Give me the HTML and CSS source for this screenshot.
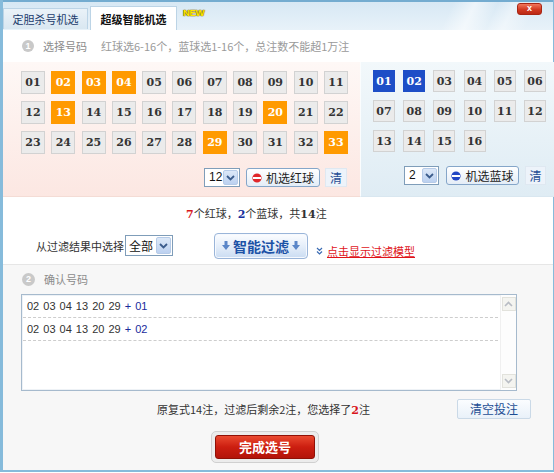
FILE: index.html
```html
<!DOCTYPE html>
<html lang="zh-CN">
<head>
<meta charset="utf-8">
<title>超级智能机选</title>
<link rel="stylesheet" href="styles.css">
</head>
<body>
<div class="win">
  <div class="head">
    <div class="tab">定胆杀号机选</div>
    <div class="tab active">超级智能机选</div>
    <span class="new">NEW</span>
    <div class="close">x</div>
  </div>

  <div class="step s1">
    <span class="num">1</span>
    <span class="step-title">选择号码</span>
    <span class="desc">红球选6-16个，蓝球选1-16个，总注数不能超1万注</span>
  </div>

  <div class="pick">
    <div class="panel red-panel">
      <div class="grid red-grid">
        <span class="ball">01</span><span class="ball on">02</span><span class="ball on">03</span><span class="ball on">04</span><span class="ball">05</span><span class="ball">06</span><span class="ball">07</span><span class="ball">08</span><span class="ball">09</span><span class="ball">10</span><span class="ball">11</span>
        <span class="ball">12</span><span class="ball on">13</span><span class="ball">14</span><span class="ball">15</span><span class="ball">16</span><span class="ball">17</span><span class="ball">18</span><span class="ball">19</span><span class="ball on">20</span><span class="ball">21</span><span class="ball">22</span>
        <span class="ball">23</span><span class="ball">24</span><span class="ball">25</span><span class="ball">26</span><span class="ball">27</span><span class="ball">28</span><span class="ball on">29</span><span class="ball">30</span><span class="ball">31</span><span class="ball">32</span><span class="ball on">33</span>
      </div>
      <div class="ctrl red-ctrl">
        <div class="sel sel-12"><span class="sel-val">12</span><span class="sel-arrow"><svg width="9" height="6" viewBox="0 0 9 6"><path d="M1 1 L4.5 4.5 L8 1" fill="none" stroke="#3b5c8c" stroke-width="1.8"/></svg></span></div>
        <div class="rbtn"><svg class="bico" width="10" height="10" viewBox="0 0 10 10"><circle cx="5" cy="5" r="4.6" fill="#e0262a"/><rect x="1" y="4" width="8" height="2" fill="#fff"/></svg><span>机选红球</span></div>
        <div class="clr">清</div>
      </div>
    </div>
    <div class="panel blue-panel">
      <div class="grid blue-grid">
        <span class="ball b on">01</span><span class="ball b on">02</span><span class="ball b">03</span><span class="ball b">04</span><span class="ball b">05</span><span class="ball b">06</span>
        <span class="ball b">07</span><span class="ball b">08</span><span class="ball b">09</span><span class="ball b">10</span><span class="ball b">11</span><span class="ball b">12</span>
        <span class="ball b">13</span><span class="ball b">14</span><span class="ball b">15</span><span class="ball b">16</span>
      </div>
      <div class="ctrl blue-ctrl">
        <div class="sel sel-2"><span class="sel-val">2</span><span class="sel-arrow"><svg width="9" height="6" viewBox="0 0 9 6"><path d="M1 1 L4.5 4.5 L8 1" fill="none" stroke="#3b5c8c" stroke-width="1.8"/></svg></span></div>
        <div class="rbtn bbtn"><svg class="bico" width="10" height="10" viewBox="0 0 10 10"><circle cx="5" cy="5" r="4.6" fill="#2146c4"/><rect x="1" y="4" width="8" height="2" fill="#fff"/></svg><span>机选蓝球</span></div>
        <div class="clr">清</div>
      </div>
    </div>
  </div>

  <div class="summary"><b class="rn">7</b>个红球，<b class="bn">2</b>个蓝球，共<b class="tn">14</b>注</div>

  <div class="filter">
    <span class="flabel">从过滤结果中选择</span>
    <div class="sel sel-all"><span class="sel-val">全部</span><span class="sel-arrow"><svg width="9" height="6" viewBox="0 0 9 6"><path d="M1 1 L4.5 4.5 L8 1" fill="none" stroke="#3b5c8c" stroke-width="1.8"/></svg></span></div>
    <div class="smart">
      <svg width="8" height="9" viewBox="0 0 8 9"><path d="M2.5 0 H5.5 V4 H8 L4 9 L0 4 H2.5 Z" fill="#5a86c8"/></svg>
      <span>智能过滤</span>
      <svg width="8" height="9" viewBox="0 0 8 9"><path d="M2.5 0 H5.5 V4 H8 L4 9 L0 4 H2.5 Z" fill="#5a86c8"/></svg>
    </div>
    <div class="more">
      <svg width="7" height="8" viewBox="0 0 7 8"><path d="M1 1 L3.5 3.5 L6 1 M1 4.5 L3.5 7 L6 4.5" fill="none" stroke="#3a6bb3" stroke-width="1.2"/></svg>
      <a class="link">点击显示过滤模型</a>
    </div>
  </div>

  <div class="confirm">
    <div class="step s2">
      <span class="num">2</span>
      <span class="step-title">确认号码</span>
    </div>
    <div class="list">
      <div class="rows">
        <div class="row">02 03 04 13 20 29 <span class="plus">+ 01</span></div>
        <div class="row">02 03 04 13 20 29 <span class="plus">+ 02</span></div>
      </div>
      <div class="sbar">
        <span class="sb-btn"><svg width="9" height="6" viewBox="0 0 9 6"><path d="M1 5 L4.5 1.5 L8 5" fill="none" stroke="#b8bcc4" stroke-width="1.6"/></svg></span>
        <span class="sb-btn"><svg width="9" height="6" viewBox="0 0 9 6"><path d="M1 1 L4.5 4.5 L8 1" fill="none" stroke="#b8bcc4" stroke-width="1.6"/></svg></span>
      </div>
    </div>
    <div class="foot">
      <span class="ftext">原复式14注，过滤后剩余2注，您选择了<b class="rn">2</b>注</span>
      <div class="clear-all">清空投注</div>
    </div>
    <div class="done-wrap">
      <div class="done-ring"><div class="done">完成选号</div></div>
    </div>
  </div>
</div>
</body>
</html>
```

FILE: styles.css
```css
* { box-sizing: border-box; }
html, body { margin: 0; padding: 0; }
body {
  width: 554px;
  height: 473px;
  overflow: hidden;
  background: #fff;
  font-family: "Noto Sans CJK SC", "Liberation Sans", sans-serif;
  font-size: 11px;
  color: #333;
}
.win {
  width: 554px;
  height: 472px;
  border-left: 3px solid #86bbdb;
  border-right: 1px solid #86bbdb;
  border-bottom: 2px solid #86bbdb;
  display: flex;
  flex-direction: column;
  background: #fff;
}

/* header */
.head {
  height: 30px;
  flex: none;
  border-top: 2px solid #74acd0;
  background:
    linear-gradient(115deg, transparent 80%, rgba(255,255,255,0.55) 84%, transparent 88%, rgba(255,255,255,0.4) 91%, transparent 95%),
    linear-gradient(#d7e8f4, #e8f2f9);
  display: flex;
  align-items: flex-end;
}
.tab {
  width: 85px;
  height: 21px;
  margin-bottom: 1px;
  background: linear-gradient(#eaf2f8, #d9e7f1);
  border: 1px solid #bcd4e6;
  border-bottom: none;
  color: #1b3b6b;
  text-align: center;
  line-height: 20px;
}
.tab.active {
  width: 87px;
  height: 24px;
  margin-left: 2px;
  margin-bottom: 0;
  background: #fff;
  color: #111;
  font-weight: bold;
  line-height: 24px;
}
.new {
  align-self: flex-start;
  margin-top: 6px;
  margin-left: 6px;
  font-family: "Liberation Sans", sans-serif;
  font-size: 9.5px;
  font-weight: bold;
  color: #ffe800;
  letter-spacing: -0.4px;
  line-height: 10px;
  text-shadow: 0 0 1px #7a6000, 0 0 1px #7a6000, 0 0 1px #7a6000;
}
.close {
  align-self: flex-start;
  margin-top: 1px;
  margin-left: auto;
  margin-right: 11px;
  width: 25px;
  height: 12px;
  border: 1px solid #a82614;
  border-radius: 3px;
  background: linear-gradient(#f2775c, #d23a22 55%, #bb2914);
  color: #fff;
  font-family: "Liberation Sans", sans-serif;
  font-size: 9px;
  font-weight: bold;
  line-height: 9px;
  text-align: center;
}

/* step headings */
.step {
  display: flex;
  align-items: center;
  padding-left: 19px;
  flex: none;
}
.s1 { height: 32px; }
.num {
  width: 12px;
  height: 12px;
  border-radius: 50%;
  background: #c9c9c9;
  color: #fff;
  font-family: "Liberation Sans", sans-serif;
  font-size: 9px;
  font-weight: bold;
  line-height: 12px;
  text-align: center;
}
.step-title { margin-left: 9px; color: #8c8c8c; }
.desc { margin-left: 14px; color: #9a9a9a; }

/* picking panels */
.pick { display: flex; height: 135px; flex: none; }
.panel { display: flex; flex-direction: column; }
.red-panel {
  width: 357px;
  padding: 9px 13px 10px 18px;
  background: linear-gradient(#fef8f6, #fce7e2);
  border-bottom: 1px solid #f4dcd5;
}
.blue-panel {
  flex: 1;
  padding: 8px 18px 12px 12px;
  background: linear-gradient(#f2f8fb, #dfecf4);
  border-left: 1px solid #fbfdfe;
  border-bottom: 1px solid #d9e7f0;
}
.grid { display: grid; }
.red-grid {
  grid-template-columns: repeat(11, 24px);
  grid-auto-rows: 23px;
  column-gap: 6.3px;
  row-gap: 7px;
}
.blue-grid {
  grid-template-columns: repeat(6, 22px);
  grid-auto-rows: 22px;
  column-gap: 8.2px;
  row-gap: 8px;
}
.ball {
  display: flex;
  align-items: center;
  justify-content: center;
  background: #ebebeb;
  border: 1px solid #d2d2d2;
  color: #333;
  font-family: "DejaVu Serif", serif;
  font-size: 11px;
  font-weight: bold;
}
.ball.on { background: #ff9a00; border-color: #ff9a00; color: #fff; }
.ball.b.on { background: #1d4ec7; border-color: #1d4ec7; color: #fff; }

.ctrl {
  display: flex;
  justify-content: flex-end;
  align-items: center;
  height: 19px;
  margin-top: 14px;
}
.sel {
  display: flex;
  align-items: center;
  height: 19px;
  background: #fff;
  border: 1px solid #7f9db9;
  padding: 1px;
}
.sel-val {
  flex: 1;
  padding-left: 3px;
  font-family: "Liberation Sans", sans-serif;
  font-size: 12px;
  color: #111;
  line-height: 15px;
}
.sel-arrow {
  width: 15px;
  height: 15px;
  display: flex;
  align-items: center;
  justify-content: center;
  background: linear-gradient(#dce8f8, #bcd1f0);
  border: 1px solid #b6cbe8;
  border-radius: 2px;
}
.sel-12 { width: 36px; }
.sel-2 { width: 35px; }
.rbtn {
  width: 74px;
  height: 19px;
  margin-left: 6px;
  display: flex;
  align-items: center;
  justify-content: center;
  gap: 4px;
  border: 1px solid #85a6c9;
  border-radius: 3px;
  background: linear-gradient(#ffffff, #e4edf7);
  color: #222;
  font-size: 12px;
}
.bbtn { width: 73px; margin-left: 7px; }
.clr {
  width: 22px;
  height: 19px;
  margin-left: 5px;
  background: #edf3fa;
  border: 1px solid #dfe8f1;
  color: #1f4e95;
  font-size: 12px;
  text-align: center;
  line-height: 17px;
}
.blue-ctrl .clr { width: 21px; margin-left: 6px; }

/* summary + filter */
.summary {
  height: 33px;
  flex: none;
  padding-left: 183px;
  line-height: 33px;
  color: #333;
}
.summary b, .foot b { font-family: "DejaVu Serif", serif; font-size: 11px; }
.rn { color: #d8141a; }
.bn { color: #17309e; }
.tn { color: #333; }

.filter {
  height: 35px;
  flex: none;
  display: flex;
  align-items: center;
  padding: 3px 0 6px 33px;
  border-bottom: 1px solid #e6e6e6;
}
.flabel { color: #333; }
.sel-all { width: 48px; height: 21px; margin-left: 1px; }
.sel-all .sel-val { font-family: "Noto Sans CJK SC", sans-serif; font-size: 12px; padding-left: 2px; }
.sel-all .sel-arrow { height: 17px; }
.smart {
  width: 94px;
  height: 26px;
  margin-left: 41px;
  display: flex;
  align-items: center;
  justify-content: center;
  gap: 3px;
  border: 1px solid #9ab5d9;
  border-radius: 4px;
  background: linear-gradient(#fcfdff, #e3edf9 55%, #cadcf2);
  box-shadow: inset 0 0 0 1px #f6f9fe;
  color: #1c52a6;
  font-size: 14px;
  font-weight: bold;
}
.more {
  align-self: flex-end;
  margin-left: 8px;
  display: flex;
  align-items: center;
  gap: 4px;
  height: 14px;
}
.link { color: #e0141a; text-decoration: underline; font-size: 11px; }

/* confirm */
.confirm {
  flex: 1;
  display: flex;
  flex-direction: column;
  background: #f7f7f7;
}
.s2 { height: 22px; margin-top: 3px; }
.s2 .num { width: 13px; height: 13px; line-height: 13px; }
.list {
  margin: 4px 0 0 18px;
  width: 496px;
  height: 97px;
  flex: none;
  display: flex;
  background: #fff;
  border: 1px solid #a6bacd;
  box-shadow: inset 0 0 0 1px #eef2f6;
}
.rows { flex: 1; padding: 0 2px 0 1px; }
.row {
  height: 23px;
  line-height: 22px;
  padding-left: 4px;
  border-bottom: 1px dashed #cdcdcd;
  font-family: "Liberation Sans", sans-serif;
  font-size: 11px;
  word-spacing: 1px;
  color: #333;
}
.plus { color: #1a2b9c; }
.sbar {
  width: 16px;
  display: flex;
  flex-direction: column;
  justify-content: space-between;
  align-items: center;
  padding: 2px 0;
  background: #fdfdfd;
  border-left: 1px solid #f0f0f0;
}
.sb-btn {
  width: 14px;
  height: 14px;
  display: flex;
  align-items: center;
  justify-content: center;
  background: #f4f4f0;
  border: 1px solid #e2e2dc;
}
.foot {
  margin-top: 8px;
  height: 20px;
  flex: none;
  display: flex;
  align-items: center;
}
.ftext { padding-left: 154px; color: #333; }
.clear-all {
  margin-left: auto;
  margin-right: 22px;
  width: 74px;
  height: 20px;
  background: linear-gradient(#fbfdff, #e9f1f9);
  border: 1px solid #cad9e7;
  border-radius: 2px;
  color: #1d4e94;
  font-size: 12px;
  text-align: center;
  line-height: 18px;
}
.done-wrap { margin-top: 12px; padding-left: 208px; flex: none; }
.done-ring {
  width: 108px;
  height: 32px;
  padding: 3px;
  background: #ececec;
  border: 1px solid #d0d0d0;
  border-radius: 5px;
}
.done {
  height: 100%;
  border: 1px solid #8f1006;
  border-radius: 3px;
  background: linear-gradient(#ea4a30, #cc1e10 50%, #b3140a);
  color: #fff;
  font-size: 13px;
  font-weight: bold;
  text-align: center;
  line-height: 22px;
}
```
